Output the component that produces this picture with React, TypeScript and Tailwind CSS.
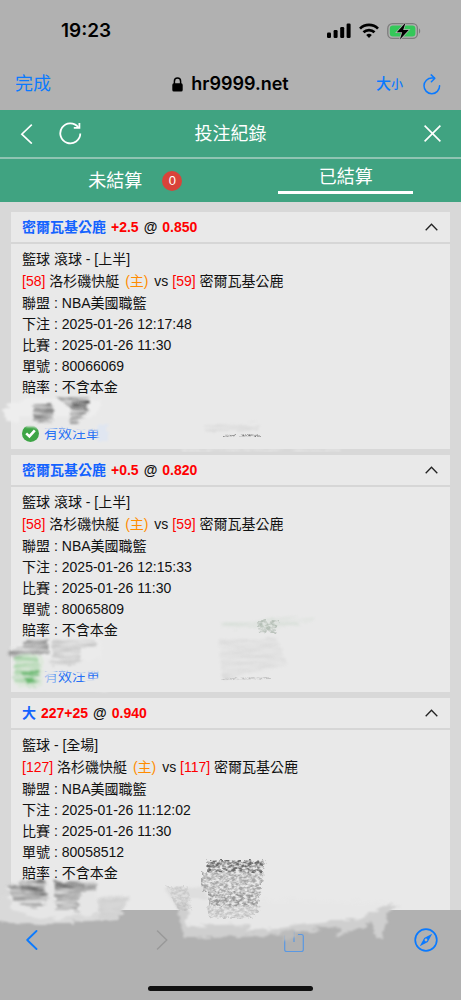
import type { ReactNode } from "react";

type Bet = {
  id: string;
  pick: string;
  line: string;
  odds: string;
  category: string;
  home: { score: number; name: string };
  away: { score: number; name: string };
  placedAt: string;
  startsAt: string;
  status?: string;
};

const bets: Bet[] = [
  {
    id: "80066069",
    pick: "密爾瓦基公鹿",
    line: "+2.5",
    odds: "0.850",
    category: "籃球 滾球 - [上半]",
    home: { score: 58, name: "洛杉磯快艇" },
    away: { score: 59, name: "密爾瓦基公鹿" },
    placedAt: "2025-01-26 12:17:48",
    startsAt: "2025-01-26 11:30",
    status: "有效注單",
  },
  {
    id: "80065809",
    pick: "密爾瓦基公鹿",
    line: "+0.5",
    odds: "0.820",
    category: "籃球 滾球 - [上半]",
    home: { score: 58, name: "洛杉磯快艇" },
    away: { score: 59, name: "密爾瓦基公鹿" },
    placedAt: "2025-01-26 12:15:33",
    startsAt: "2025-01-26 11:30",
    status: "有效注單",
  },
  {
    id: "80058512",
    pick: "大",
    line: "227+25",
    odds: "0.940",
    category: "籃球 - [全場]",
    home: { score: 127, name: "洛杉磯快艇" },
    away: { score: 117, name: "密爾瓦基公鹿" },
    placedAt: "2025-01-26 11:12:02",
    startsAt: "2025-01-26 11:30",
  },
];

function StatusBar() {
  return (
    <div className="flex h-[62px] items-center justify-between pl-[61px] pr-10">
      <span className="text-[19px] font-semibold">19:23</span>
      <div className="flex items-center gap-2">
        <svg width="24" height="16" viewBox="0 0 24 16" aria-hidden="true">
          <rect x="0" y="9.5" width="4" height="5.5" rx="1.2" />
          <rect x="6.6" y="7" width="4" height="8" rx="1.2" />
          <rect x="13.2" y="4" width="4" height="11" rx="1.2" />
          <rect x="19.6" y="0.5" width="4" height="14.5" rx="1.2" />
        </svg>
        <svg width="20" height="16" viewBox="0 0 20 16" fill="none" stroke="#000" strokeWidth="2.7" aria-hidden="true">
          <path d="M1 5.6a12.8 12.8 0 0 1 18 0" />
          <path d="M4.5 9.3a7.8 7.8 0 0 1 11 0" />
          <path d="M10 15l-2.8-2.9a4 4 0 0 1 5.6 0z" fill="#000" stroke="none" />
        </svg>
        <svg width="34" height="18" viewBox="0 0 34 18" aria-hidden="true">
          <rect x="0.8" y="1.7" width="29.6" height="14.6" rx="4.6" fill="none" stroke="#7d7d7d" strokeWidth="1.3" />
          <rect x="2.8" y="3.6" width="25.6" height="10.8" rx="3" fill="#34c759" />
          <path d="M32 6.5c1.6.6 1.6 4.4 0 5z" fill="#7d7d7d" />
          <path d="M18.5 0.8 9.8 10.3h5.4l-2.3 7.2 8.8-9.5h-5.5z" stroke="#b1b1b1" strokeWidth="1.5" paintOrder="stroke" />
        </svg>
      </div>
    </div>
  );
}

function BrowserBar() {
  return (
    <div className="grid h-12 grid-cols-3 items-center pb-1 text-[#0a7aff]">
      <button type="button" className="ml-[15px] justify-self-start text-lg">
        完成
      </button>
      <div className="flex items-center gap-2 justify-self-center text-lg font-semibold text-black">
        <svg width="11" height="15" viewBox="0 0 11 15" className="shrink-0" aria-hidden="true">
          <rect x="0.3" y="6.3" width="10.4" height="8.2" rx="1.6" />
          <path d="M2.4 7V4.2a3.1 3.1 0 0 1 6.2 0V7" fill="none" stroke="#000" strokeWidth="1.5" />
        </svg>
        hr9999.net
      </div>
      <div className="mr-5 flex items-center gap-5 justify-self-end">
        <button type="button" className="flex items-baseline font-medium">
          <span className="text-[15px]">大</span>
          <span className="text-[12px]">小</span>
        </button>
        <button type="button" aria-label="重新載入">
          <svg width="18" height="21" viewBox="0 0 18 21" fill="none" stroke="currentColor" strokeWidth="1.5" strokeLinecap="round" strokeLinejoin="round">
            <path d="M16.6 11.8A7.8 7.8 0 1 1 9 4.1h2" />
            <path d="M8.2 0.9 11.8 4.2 8.4 7.8" />
          </svg>
        </button>
      </div>
    </div>
  );
}

function PageHeader() {
  return (
    <header className="bg-[#40a381] text-white">
      <div className="grid h-[49px] grid-cols-3 items-center border-b-2 border-[#8fc4b2] px-5">
        <div className="flex items-center gap-[26px]">
          <button type="button" aria-label="返回">
            <svg width="13" height="20" viewBox="0 0 13 20" fill="none" stroke="currentColor" strokeWidth="1.6">
              <path d="M11.8 0.6 1.8 10.2 11.8 19.6" />
            </svg>
          </button>
          <button type="button" aria-label="重新整理">
            <svg width="23" height="23" viewBox="0 0 23 23" fill="none" stroke="currentColor" strokeWidth="1.8">
              <path d="M21.3 11.5A10 10 0 1 1 19.2 5.2" />
              <path d="M20.4 1v4.800h-5.600" />
            </svg>
          </button>
        </div>
        <h1 className="justify-self-center text-lg font-normal">投注紀錄</h1>
        <button type="button" aria-label="關閉" className="justify-self-end">
          <svg width="17" height="17" viewBox="0 0 17 17" fill="none" stroke="currentColor" strokeWidth="1.6">
            <path d="M0.6 0.6 16.4 16.4M16.4 0.6 0.6 16.4" />
          </svg>
        </button>
      </div>
      <nav className="flex h-[43px] text-lg font-normal">
        <button type="button" className="flex flex-1 items-center justify-center">
          <span className="relative">
            未結算
            <span className="absolute left-full top-1 ml-5 grid size-5 place-items-center rounded-full bg-[#d9433a] text-[13px]">
              0
            </span>
          </span>
        </button>
        <button type="button" className="flex flex-1 flex-col items-center pt-1">
          <span>已結算</span>
          <span className="h-[3px] w-[135px] bg-white" />
        </button>
      </nav>
    </header>
  );
}

// Shared filters for the rubbed-out areas
function SmudgeDefs() {
  return (
    <svg className="absolute size-0" aria-hidden="true">
      <defs>
        <filter id="streak" x="-20%" y="-20%" width="140%" height="140%">
          <feTurbulence type="fractalNoise" baseFrequency="0.04 0.28" numOctaves="4" seed="4" result="n" />
          <feColorMatrix in="n" type="matrix" values="0 0 0 0 0  0 0 0 0 0  0 0 0 0 0  1.7 0 0 0 -0.3" result="m" />
          <feDisplacementMap in="SourceGraphic" in2="n" scale="9" result="d" />
          <feComposite in="d" in2="m" operator="in" result="c" />
          <feGaussianBlur in="c" stdDeviation="0.9" />
        </filter>
        <filter id="grain" x="-20%" y="-20%" width="140%" height="140%">
          <feTurbulence type="fractalNoise" baseFrequency="0.25 0.4" numOctaves="4" seed="9" result="n" />
          <feColorMatrix in="n" type="matrix" values="0 0 0 0 0  0 0 0 0 0  0 0 0 0 0  2.6 0 0 0 -0.8" result="m" />
          <feDisplacementMap in="SourceGraphic" in2="n" scale="5" result="d" />
          <feComposite in="d" in2="m" operator="in" result="c" />
          <feGaussianBlur in="c" stdDeviation="0.6" />
        </filter>
        <filter id="chalk" x="-20%" y="-20%" width="140%" height="140%">
          <feTurbulence type="fractalNoise" baseFrequency="0.06 0.2" numOctaves="3" seed="2" result="n" />
          <feDisplacementMap in="SourceGraphic" in2="n" scale="9" result="d" />
          <feGaussianBlur in="d" stdDeviation="1.3" />
        </filter>
      </defs>
    </svg>
  );
}

function Smudge({ children }: { children: ReactNode }) {
  return (
    <svg
      className="pointer-events-none absolute left-0 top-0 h-60 w-[440px] overflow-visible"
      viewBox="0 0 440 240"
      fill="none"
      aria-hidden="true"
    >
      {children}
    </svg>
  );
}

const smudges: Record<string, ReactNode> = {
  "80066069": (
    <Smudge>
      <g filter="url(#chalk)">
        <path d="M-6 196 10 188 60 186 90 188 86 208 10 214-8 206z" fill="#eeeeee" />
        <path d="M8 204 96 204 96 218 60 218 30 217 8 214z" fill="#e9e9e9" />
        <path d="M86 210h10v20h-9z" fill="#dfe6f2" opacity="0.9" />
      </g>
      <g filter="url(#streak)">
        <path d="M22 191h19l2 18H22z" fill="#555" opacity="0.75" />
        <path d="M46 186l34-2-4 14-8 13H58l3-14z" fill="#555" opacity="0.65" />
        <path d="M60 188h19l-4 10H60z" fill="#222" opacity="0.9" />
        <path d="M192 212h56v8h-54z" fill="#bbb" opacity="0.35" />
      </g>
      <path d="M228 224l8-1 8 1h5M212 224l14-1" stroke="#777" strokeWidth="2" filter="url(#grain)" />
      <path d="M170 239q60-3 160 0" stroke="#e2e2e2" strokeWidth="3" filter="url(#chalk)" />
    </Smudge>
  ),
  "80065809": (
    <Smudge>
      <g filter="url(#chalk)">
        <path d="M0 196 8 186 90 184 92 210 30 214 8 206z" fill="#ebebeb" />
        <path d="M4 200h28v34l-28-4z" fill="#dfe8dd" />
        <path d="M33 204h66v14l-32-1-34 2z" fill="#e9e9e9" />
        <path d="M30 216h14v14H32z" fill="#e9e9e9" opacity="0.6" />
        <path d="M72 223h24v12H74z" fill="#e9e9e9" />
      </g>
      <g filter="url(#streak)">
        <path d="M-4 200 14 186 36 181 38 196 6 204z" fill="#666" opacity="0.75" />
        <path d="M42 184h44v9H70v17H40z" fill="#999" opacity="0.5" />
        <path d="M4 200h22l4 18-6 14-22-6z" fill="#8ccb8f" opacity="0.7" />
        <path d="M8 215h22l-12 17z" fill="#3ba544" opacity="0.9" />
        <path d="M212 168l90-7v5l-30 6-60 2z" fill="#c3d3c5" opacity="0.45" />
        <path d="M208 184h58l10 26-64 14z" fill="#c2c4c2" opacity="0.35" />
      </g>
      <path d="M246 165h22l-4 13h-16z" fill="#8c9c8e" opacity="0.5" filter="url(#grain)" />
      <path d="M210 224l50-1" stroke="#bbb" strokeWidth="2" filter="url(#grain)" />
      <path d="M214 240h160" stroke="#e1e1e1" strokeWidth="3" filter="url(#chalk)" />
    </Smudge>
  ),
};

function ValidBadge({ label }: { label: string }) {
  return (
    <p className="flex items-center gap-[5px] text-[#2470f5]">
      <svg width="17" height="17" viewBox="0 0 17 17" aria-hidden="true">
        <circle cx="8.5" cy="8.5" r="8.5" fill="#3ea546" />
        <path d="M4.2 8.4 7.4 11.4 12.8 5.4" fill="none" stroke="#fff" strokeWidth="2.6" />
      </svg>
      {label}
    </p>
  );
}

function BetCard({ bet }: { bet: Bet }) {
  const rows = [
    ["聯盟", "NBA美國職籃"],
    ["下注", bet.placedAt],
    ["比賽", bet.startsAt],
    ["單號", bet.id],
    ["賠率", "不含本金"],
  ];

  return (
    <article className="relative bg-[#e9e9e9] text-sm leading-[21px]">
      <button
        type="button"
        aria-expanded="true"
        className="flex h-8 w-full items-center justify-between border-b-2 border-[#d6d6d6] pl-[11px] pr-3 font-bold"
      >
        <span className="flex gap-[5px]">
          <span className="text-[#1463ff]">{bet.pick}</span>
          <span className="text-[#ff0000]">{bet.line}</span>
          <span>@</span>
          <span className="text-[#ff0000]">{bet.odds}</span>
        </span>
        <svg width="13" height="8" viewBox="0 0 13 8" fill="none" stroke="#222" strokeWidth="1.3" aria-hidden="true">
          <path d="M0.7 7.2 6.5 1.2 12.3 7.2" />
        </svg>
      </button>
      <div className="flex flex-col gap-px px-[11px] py-[5px]">
        <p>{bet.category}</p>
        <p>
          <span className="text-[#ff0000]">[{bet.home.score}]</span> {bet.home.name}{" "}
          <span className="mx-[2px] text-[#ff8c00]">(主)</span> vs{" "}
          <span className="text-[#ff0000]">[{bet.away.score}]</span> {bet.away.name}
        </p>
        <dl>
          {rows.map(([label, value]) => (
            <div key={label} className="flex gap-1">
              <dt>{label} :</dt>
              <dd>{value}</dd>
            </div>
          ))}
        </dl>
        <div className="h-[23px]" />
        {bet.status ? <ValidBadge label={bet.status} /> : <div className="h-5" />}
      </div>
      {smudges[bet.id]}
    </article>
  );
}

function Toolbar() {
  return (
    <footer className="fixed inset-x-0 bottom-0 bg-[#b1b1b1] text-[#0a7aff]">
      <div className="flex h-[60px] items-center justify-between pl-[19px] pr-[23px]">
        <button type="button" aria-label="上一頁" className="grid w-6 place-items-center">
          <svg width="13" height="20" viewBox="0 0 13 20" fill="none" stroke="currentColor" strokeWidth="1.8" strokeLinecap="round" strokeLinejoin="round">
            <path d="M11.5 1 2.2 10 11.5 19" />
          </svg>
        </button>
        <button type="button" aria-label="下一頁" disabled className="grid w-6 place-items-center text-[#999]">
          <svg width="13" height="20" viewBox="0 0 13 20" fill="none" stroke="currentColor" strokeWidth="1.5" strokeLinecap="round" strokeLinejoin="round">
            <path d="M1.5 1 10.8 10 1.5 19" />
          </svg>
        </button>
        <button type="button" aria-label="分享" className="grid w-6 place-items-center text-[#5a98e2]">
          <svg width="20" height="26" viewBox="0 0 20 26" fill="none" stroke="currentColor" strokeWidth="1.2">
            <path d="M6 7.5H2.5a1.8 1.8 0 0 0-1.8 1.8v13.4a1.8 1.8 0 0 0 1.8 1.8h15a1.8 1.8 0 0 0 1.8-1.8V9.3a1.8 1.8 0 0 0-1.8-1.8H14M10 15V2" />
          </svg>
        </button>
        <button type="button" aria-label="Safari">
          <svg width="24" height="24" viewBox="0 0 24 24" fill="none">
            <circle cx="12" cy="12" r="10.8" stroke="currentColor" strokeWidth="1.7" />
            <path d="M18.2 5.8 13.8 14 5.8 18.2 10.2 10z" fill="currentColor" />
            <circle cx="12" cy="12" r="1.4" fill="#b1b1b1" />
          </svg>
        </button>
      </div>
      <div className="flex h-[30px] items-end justify-center pb-[9px]">
        <span className="h-[5px] w-[165px] rounded-full bg-[#111]" />
      </div>
      <svg
        className="pointer-events-none absolute -top-[70px] left-0 h-[110px] w-[461px] overflow-visible"
        viewBox="0 0 461 110"
        fill="none"
        aria-hidden="true"
      >
        <g filter="url(#chalk)">
          <path d="M-8 68 12 44 60 54 100 58 130 56 118 80 90 82 40 84-8 82z" fill="#d9d9d9" />
          <path d="M8 46 94 44 100 74 40 80 10 68z" fill="#e6e6e6" />
          <path d="M164 48 205 46 210 74 184 76z" fill="#dedede" />
          <path d="M176 64 400 66 388 74 382 98 376 98 372 82 336 98 340 86 290 94 240 96 184 98 180 80z" fill="#cfcfcf" />
          <path d="M190 58 390 62 360 78 300 84 246 92 250 84 186 86z" fill="#e7e7e7" />
          <path d="M282 92l14-2v8l-12 4z" fill="#bcbcbc" />
        </g>
        <g filter="url(#streak)">
          <path d="M8 46 46 40 48 62 34 68 14 62z" fill="#777" opacity="0.75" />
          <path d="M18 41h27v12H22z" fill="#444" opacity="0.65" />
          <path d="M54 41h42v10H80l-2 20H56z" fill="#777" opacity="0.75" />
          <path d="M54 41h30v8H54z" fill="#333" opacity="0.65" />
          <path d="M100 58h28l-10 22h-20z" fill="#bbb" opacity="0.4" />
        </g>
        <g filter="url(#grain)">
          <path d="M207 20h60l-6 12h-54z" fill="#333" opacity="0.7" />
          <path d="M202 32h62l-4 20h-58z" fill="#666" opacity="0.5" />
          <path d="M208 52h52l-2 14h-50z" fill="#555" opacity="0.55" />
          <path d="M206 66h56l-10 12h-42z" fill="#888" opacity="0.4" />
          <path d="M166 46h22l4 24h-14z" fill="#aaa" opacity="0.4" />
        </g>
        <path d="M206 21h60" stroke="#333" strokeWidth="2" filter="url(#streak)" />
      </svg>
    </footer>
  );
}

export default function App() {
  return (
    <div className="min-h-screen bg-[#d8d8d8] font-['Liberation_Sans','Noto_Sans_CJK_TC',sans-serif] text-[#111]">
      <SmudgeDefs />
      <div className="bg-[#b1b1b1] font-[Inter,'Noto_Sans_CJK_TC',sans-serif] text-black">
        <StatusBar />
        <BrowserBar />
      </div>
      <PageHeader />
      <main className="flex flex-col gap-[6px] px-[11px] pt-[10px]">
        {bets.map((bet) => (
          <BetCard key={bet.id} bet={bet} />
        ))}
      </main>
      <Toolbar />
    </div>
  );
}
